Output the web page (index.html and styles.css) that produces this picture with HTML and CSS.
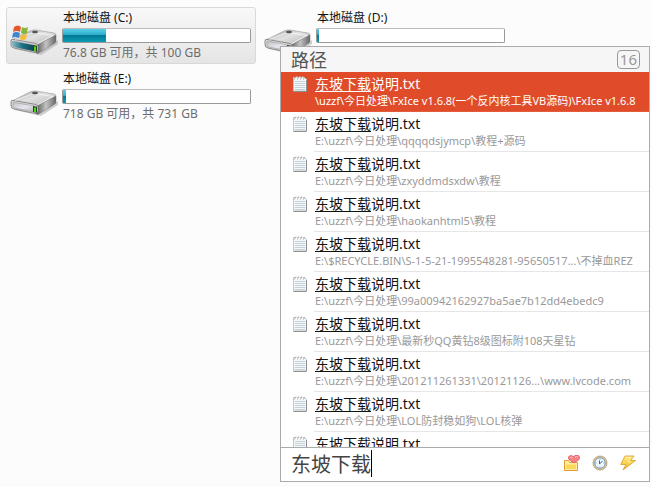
FILE: index.html
```html
<!DOCTYPE html>
<html lang="zh-CN">
<head>
    <meta charset="UTF-8">
    <meta name="viewport" content="width=device-width, initial-scale=1.0">
    <title>东坡下载</title>
    <link rel="stylesheet" href="styles.css">
</head>
<body>
    <!-- shared icons -->
    <svg class="defs" aria-hidden="true">
        <defs>
            <linearGradient id="top" x1="0" y1="0" x2="1" y2="1">
                <stop offset="0" stop-color="#999"/>
                <stop offset=".45" stop-color="#e2e2e2"/>
                <stop offset="1" stop-color="#b4b4b4"/>
            </linearGradient>
            <linearGradient id="front" x1="0" y1="0" x2="1" y2="1">
                <stop offset="0" stop-color="#c0c0c4"/>
                <stop offset=".5" stop-color="#e6e6ee"/>
                <stop offset="1" stop-color="#b0b0b8"/>
            </linearGradient>
            <linearGradient id="side" x1="0" y1="0" x2="1" y2="0">
                <stop offset="0" stop-color="#555"/>
                <stop offset=".5" stop-color="#c4c4c4"/>
                <stop offset="1" stop-color="#666"/>
            </linearGradient>
            <linearGradient id="teal" x1="0" y1="0" x2="1" y2="0">
                <stop offset="0" stop-color="#8fb9c4"/>
                <stop offset=".5" stop-color="#1c7186"/>
                <stop offset="1" stop-color="#174a58"/>
            </linearGradient>
            <linearGradient id="bolt" x1="0" y1="0" x2="0" y2="1">
                <stop offset="0" stop-color="#ffec80"/>
                <stop offset="1" stop-color="#f5b81c"/>
            </linearGradient>
            <symbol id="drive" viewBox="0 0 48 28">
                <path d="M3 19 28 26 48 12v4L31 27 5 21z" fill="#999" opacity=".45"/>
                <path d="M2 12 20 3q3-1.500 6-1L44 5q2 .5 2 2L29 17q-2 1-5 .5L3 14q-2-.5-1-2z" fill="url(#top)" stroke="#999" stroke-width=".6"/>
                <path d="M27 17 46 7v6q0 1-1 2L29 25q-2 1-3 0z" fill="url(#side)" stroke="#777" stroke-width=".5"/>
                <path d="M1 13q0-2 2-1.700l22 4q3 .7 3 3V22q0 3-3 2.500L4 20q-3-.6-3-3z" fill="#d8d8d8" stroke="#777" stroke-width=".8"/>
                <path d="M3 14q0-1 1-.7l20 3.700q2 .5 2 2v3q0 1.300-2 1L5 19q-2-.4-2-2z" fill="url(#front)" stroke="#999" stroke-width=".6"/>
                <path d="M5 11.500 24 4.500l19 3-15 8" fill="none" stroke="#fff" stroke-width=".9" opacity=".7"/>
                <ellipse cx="25" cy="4" rx="3" ry="1.200" fill="#555"/>
                <path d="m23 17 4 .8v6l-4-.8z" fill="#174b12"/>
                <path d="M25 18.500v4.500" stroke="#58e51b" stroke-width="1.800"/>
            </symbol>
            <symbol id="note" viewBox="0 0 14 17">
                <path d="M.5 2.500h11l2 2v11.500H.5z" fill="#f5f8f9" stroke="#c2c4c5"/>
                <path d="M.5 16.500h13V5" fill="none" stroke="#8e8e8e"/>
                <path d="M2 6.500h10M2 8.500h10M2 10.500h10M2 12.500h10M2 14.500h10" stroke="#c4d1d8"/>
                <path d="M1.500 4.500 3 1.500M4.500 4.500 6 1.500M7.500 4.500 9 1.500M10.500 4.500 11.500 2" fill="none" stroke="#aaa"/>
                <path d="M2.500 4.500 4 1.500M5.500 4.500 7 1.500M8.500 4.500 10 1.500" fill="none" stroke="#fff" stroke-width=".8"/>
            </symbol>
        </defs>
    </svg>

    <main class="drives">
        <section class="drive selected">
            <div class="drive-icon">
                <svg viewBox="0 0 48 32" aria-hidden="true">
                    <use href="#drive" y="4" width="48" height="28"/>
                    <path d="M2 17 23 21v6L4 23q-2-1-2-3z" fill="url(#teal)"/>
                    <path d="M4 3q4-3 7 0l-1 5q-3-2-7 0z" fill="#e4592c"/>
                    <path d="M12 3q3 2 6 0l-1 6q-3 2-6 0z" fill="#83b83d"/>
                    <path d="M3 9q3-2 7 0l-1 5q-4-2-7 0z" fill="#3f87ca"/>
                    <path d="M11 10q3 2 6 0l-1 5q-3 2-6 0z" fill="#f6bd32"/>
                </svg>
            </div>
            <div class="drive-info">
                <div class="drive-name">本地磁盘 (C:)</div>
                <div class="bar"><div class="bar-fill" style="width: 23%"></div></div>
                <div class="drive-size">76.8 GB 可用，共 100 GB</div>
            </div>
        </section>
        <section class="drive">
            <div class="drive-icon">
                <svg viewBox="0 0 48 32" aria-hidden="true"><use href="#drive" y="4" width="48" height="28"/></svg>
            </div>
            <div class="drive-info">
                <div class="drive-name">本地磁盘 (D:)</div>
                <div class="bar"><div class="bar-fill" style="width: 1%"></div></div>
            </div>
        </section>
        <section class="drive">
            <div class="drive-icon">
                <svg viewBox="0 0 48 32" aria-hidden="true"><use href="#drive" y="4" width="48" height="28"/></svg>
            </div>
            <div class="drive-info">
                <div class="drive-name">本地磁盘 (E:)</div>
                <div class="bar"><div class="bar-fill" style="width: 1.8%"></div></div>
                <div class="drive-size">718 GB 可用，共 731 GB</div>
            </div>
        </section>
    </main>

    <!-- search window floating over the drives -->
    <div class="search">
        <header class="search-header">
            <h1>路径</h1>
            <span class="count">16</span>
        </header>

        <ul class="results">
            <li class="result active">
                <svg class="note" aria-hidden="true"><use href="#note"/></svg>
                <div class="result-text">
                    <div class="result-name"><u>东坡下载</u>说明.txt</div>
                    <div class="result-path">\uzzf\今日处理\FxIce v1.6.8(一个反内核工具VB源码)\FxIce v1.6.8</div>
                </div>
            </li>
            <li class="result">
                <svg class="note" aria-hidden="true"><use href="#note"/></svg>
                <div class="result-text">
                    <div class="result-name"><u>东坡下载</u>说明.txt</div>
                    <div class="result-path">E:\uzzf\今日处理\qqqqdsjymcp\教程+源码</div>
                </div>
            </li>
            <li class="result">
                <svg class="note" aria-hidden="true"><use href="#note"/></svg>
                <div class="result-text">
                    <div class="result-name"><u>东坡下载</u>说明.txt</div>
                    <div class="result-path">E:\uzzf\今日处理\zxyddmdsxdw\教程</div>
                </div>
            </li>
            <li class="result">
                <svg class="note" aria-hidden="true"><use href="#note"/></svg>
                <div class="result-text">
                    <div class="result-name"><u>东坡下载</u>说明.txt</div>
                    <div class="result-path">E:\uzzf\今日处理\haokanhtml5\教程</div>
                </div>
            </li>
            <li class="result">
                <svg class="note" aria-hidden="true"><use href="#note"/></svg>
                <div class="result-text">
                    <div class="result-name"><u>东坡下载</u>说明.txt</div>
                    <div class="result-path">E:\$RECYCLE.BIN\S-1-5-21-1995548281-95650517...\不掉血REZ</div>
                </div>
            </li>
            <li class="result">
                <svg class="note" aria-hidden="true"><use href="#note"/></svg>
                <div class="result-text">
                    <div class="result-name"><u>东坡下载</u>说明.txt</div>
                    <div class="result-path">E:\uzzf\今日处理\99a00942162927ba5ae7b12dd4ebedc9</div>
                </div>
            </li>
            <li class="result">
                <svg class="note" aria-hidden="true"><use href="#note"/></svg>
                <div class="result-text">
                    <div class="result-name"><u>东坡下载</u>说明.txt</div>
                    <div class="result-path">E:\uzzf\今日处理\最新秒QQ黄钻8级图标附108天星钻</div>
                </div>
            </li>
            <li class="result">
                <svg class="note" aria-hidden="true"><use href="#note"/></svg>
                <div class="result-text">
                    <div class="result-name"><u>东坡下载</u>说明.txt</div>
                    <div class="result-path">E:\uzzf\今日处理\201211261331\20121126...\www.lvcode.com</div>
                </div>
            </li>
            <li class="result">
                <svg class="note" aria-hidden="true"><use href="#note"/></svg>
                <div class="result-text">
                    <div class="result-name"><u>东坡下载</u>说明.txt</div>
                    <div class="result-path">E:\uzzf\今日处理\LOL防封稳如狗\LOL核弹</div>
                </div>
            </li>
            <li class="result">
                <svg class="note" aria-hidden="true"><use href="#note"/></svg>
                <div class="result-text">
                    <div class="result-name"><u>东坡下载</u>说明.txt</div>
                </div>
            </li>
        </ul>

        <form class="search-form">
            <input class="query" type="text" value="东坡下载" aria-label="搜索">
            <div class="tools">
                <button type="button" aria-label="收藏">
                    <svg viewBox="0 0 16 16" aria-hidden="true">
                        <path d="M.5 15.500v-10h4l1 2h8v8z" fill="#fff0a0" stroke="#e39a35"/>
                        <path d="M2 9.500h10v4.500H2z" fill="#fbd85c"/>
                        <path d="M10 8 5.500 5Q3.500 3 5 1.300 7-.3 9.500 1.500 12-.6 14.500.6 16.500 2 15 4.500z" fill="#f58186" stroke="#d9545f" stroke-width=".8"/>
                        <path d="M6 2.500q1-1 2.500 0M11 2q2-1 3 0" fill="none" stroke="#ffc4c2"/>
                    </svg>
                </button>
                <button type="button" aria-label="历史">
                    <svg viewBox="0 0 16 16" aria-hidden="true">
                        <circle cx="8" cy="8" r="7" fill="#dcc594" stroke="#a48d61" stroke-width=".7"/>
                        <circle cx="8" cy="8" r="5.200" fill="#edf6fe" stroke="#7ba3cc"/>
                        <path d="M7.500 5.500v3.500L10.500 6" fill="none" stroke="#456789"/>
                        <path d="M8 3.500v1M8 11.500v1M3.500 8h1M11.500 8h1" stroke="#7c9dbb"/>
                    </svg>
                </button>
                <button type="button" aria-label="快速操作">
                    <svg viewBox="0 0 16 16" aria-hidden="true">
                        <path d="M5 1h9L10.500 5.500H15.500L3 15 6 9.500H.7z" fill="url(#bolt)" stroke="#d99b2b" stroke-width=".8" stroke-linejoin="round"/>
                        <path d="M5.500 2.500h5L8 7h3" fill="none" stroke="#fff6b8" stroke-width=".8"/>
                    </svg>
                </button>
            </div>
        </form>
    </div>
</body>
</html>
```
FILE: styles.css
```css
* {
    margin: 0;
    padding: 0;
    box-sizing: border-box;
}

body {
    min-height: 100vh;
    position: relative;
    overflow: hidden;
    background: #fcfcfc;
    color: #111;
    font-family: 'Noto Sans', 'Noto Sans CJK SC', sans-serif;
    font-size: 12px;
}

.defs {
    position: absolute;
    width: 0;
    height: 0;
}

/* drives */
.drives {
    display: grid;
    grid-template-columns: repeat(auto-fill, 250px);
    gap: 4px;
    padding: 7px 6px;
}

.drive {
    display: flex;
    gap: 4px;
    height: 57px;
    padding: 0 4px 0 3px;
    border: 1px solid transparent;
    border-radius: 3px;
}

.drive.selected {
    background: linear-gradient(#f8f8f8, #e5e5e5);
    border-color: #d9d9d9;
}

.drive-icon {
    width: 48px;
    padding-top: 16px;
}

.drive-icon svg {
    display: block;
    width: 48px;
    height: 32px;
}

.drive-info {
    flex: 1;
    white-space: nowrap;
}

.drive-name {
    line-height: 20px;
    padding-left: 1px;
}

.bar {
    height: 15px;
    border: 1px solid #999;
    border-top-color: #bbb;
    border-radius: 2px;
    background: #fff;
}

.bar-fill {
    height: 100%;
    background: linear-gradient(#5bd0ea 0%, #27a9c8 48%, #037a96 50%, #0a9cb4 100%);
}

.drive-size {
    padding-left: 1px;
    line-height: 20px;
    color: #6d6d6d;
}

/* search window */
.search {
    position: absolute;
    top: 46px;
    left: 280px;
    right: 2px;
    bottom: 5px;
    display: flex;
    flex-direction: column;
    background: #fff;
    border: 1px solid #aaa;
}

.search-header {
    display: flex;
    align-items: center;
    justify-content: space-between;
    height: 25px;
    flex-shrink: 0;
    padding: 0 9px 0 10px;
    background: #f6f6f6;
}

.search-header h1 {
    font-size: 18px;
    line-height: 24px;
    font-weight: 400;
    color: #555;
}

.count {
    padding: 0 2px;
    border: 1px solid #999;
    border-radius: 4px;
    font-size: 15px;
    line-height: 17px;
    color: #999;
}

.results {
    flex: 1;
    min-height: 0;
    overflow: hidden;
    list-style: none;
}

.result {
    display: flex;
    gap: 7px;
    height: 40px;
    padding-left: 12px;
}

.note {
    width: 14px;
    height: 17px;
    margin-top: 3px;
    flex-shrink: 0;
}

.result-text {
    flex: 1;
    min-width: 0;
    padding: 3px 0 0 1px;
    border-bottom: 1px solid #e6e6e6;
    white-space: nowrap;
}

.result-name {
    font-size: 14px;
    line-height: 18px;
}

.result-name u {
    text-decoration-thickness: 1px;
    text-underline-offset: 2px;
}

.result-path {
    font-size: 11px;
    line-height: 16px;
    color: #999;
}

.active {
    background: #e04c2a;
    color: #fff;
}

.active .result-text {
    border-color: #e55c3d;
}

.active .result-path {
    color: #fff;
}

.search-form {
    display: flex;
    align-items: center;
    justify-content: space-between;
    height: 34px;
    flex-shrink: 0;
    padding: 0 13px 3px 10px;
    border-top: 1px solid #aaa;
}

/* right border is the text cursor */
.query {
    width: 81px;
    height: 27px;
    border: 0;
    border-right: 1px solid #000;
    outline: 0;
    background: none;
    color: #444;
    font: 400 20px 'Noto Sans', 'Noto Sans CJK SC', sans-serif;
}

.tools {
    display: flex;
    gap: 12px;
}

.tools button {
    width: 16px;
    height: 16px;
    border: 0;
    background: none;
    cursor: pointer;
}

.tools svg {
    display: block;
    width: 16px;
    height: 16px;
}
```
